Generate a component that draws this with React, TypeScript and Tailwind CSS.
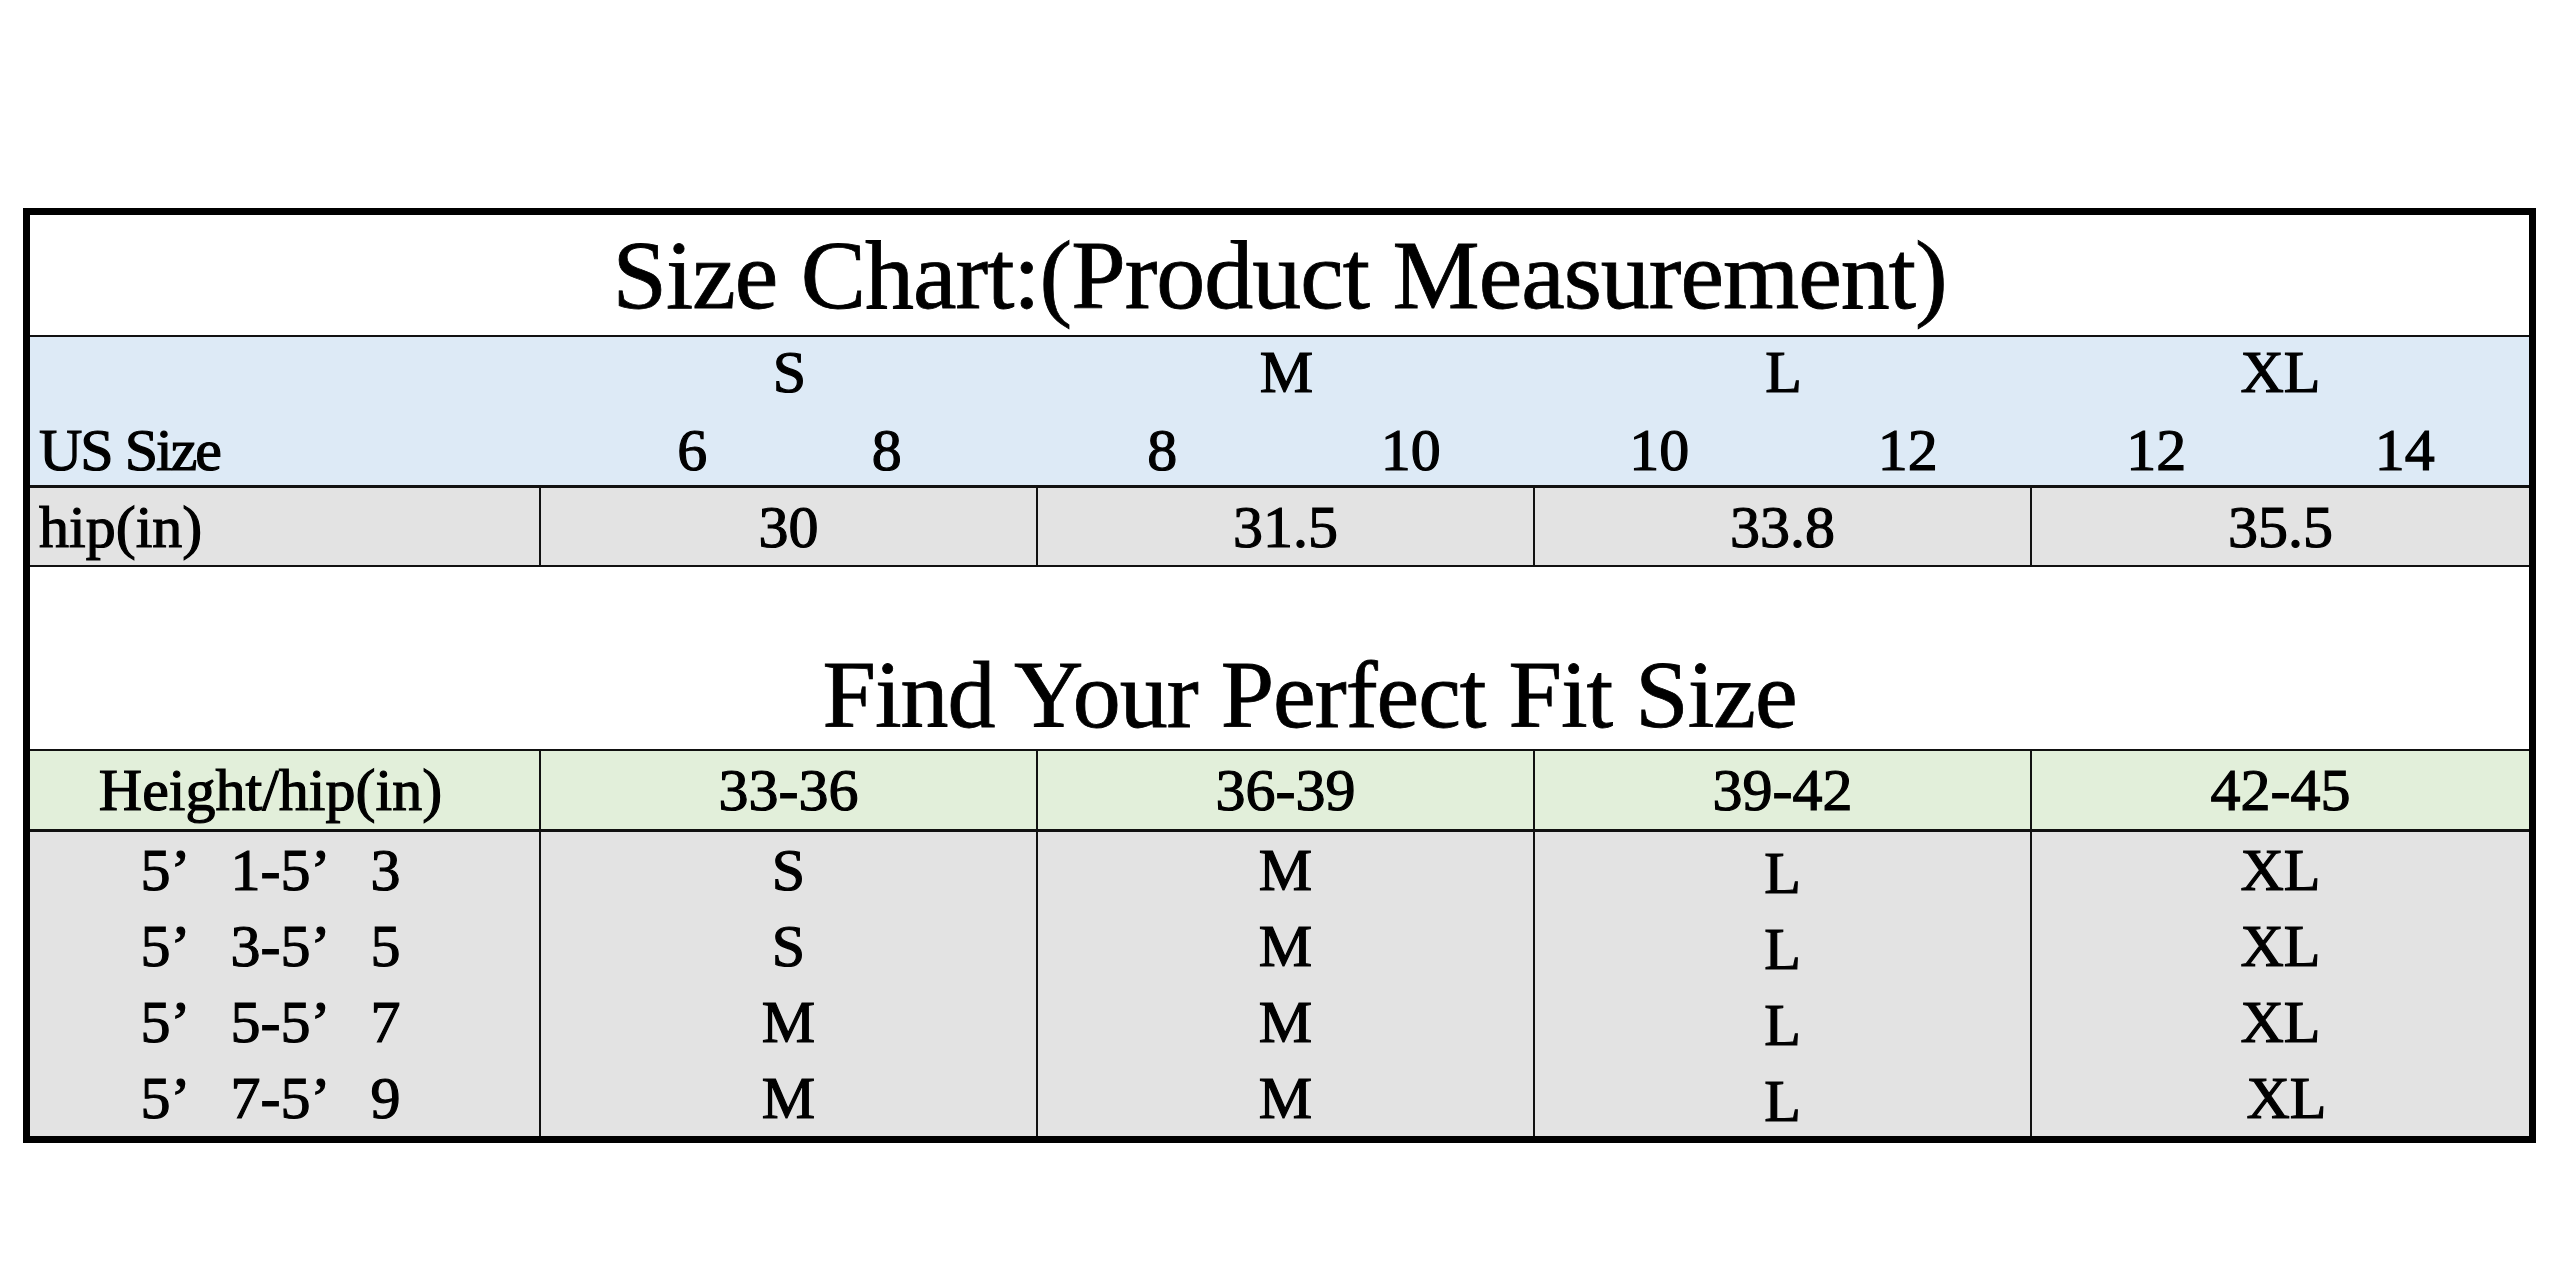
import React from "react";

// size columns shown in the chart
const sizes = [
  { name: "S", us: ["6", "8"], hip: "30", tight: true },
  { name: "M", us: ["8", "10"], hip: "31.5" },
  { name: "L", us: ["10", "12"], hip: "33.8" },
  { name: "XL", us: ["12", "14"], hip: "35.5" },
];

const fitHeaders = ["33-36", "36-39", "39-42", "42-45"];

const fitRows = [
  { h: ["1", "3"], cells: ["S", "M", "L", "XL"] },
  { h: ["3", "5"], cells: ["S", "M", "L", "XL"] },
  { h: ["5", "7"], cells: ["M", "M", "L", "XL"] },
  { h: ["7", "9"], cells: ["M", "M", "L", "XL"] },
];

const cols = "grid grid-cols-[511px_repeat(4,1fr)]";

// height label like 5’1-5’3 where the quote takes a full em
const HeightLabel = ({ from, to }: { from: string; to: string }) => (
  <span>
    5<span className="inline-block w-[1em]">’</span>
    {from}-5<span className="inline-block w-[1em]">’</span>
    {to}
  </span>
);

export default function App() {
  return (
    <div className="w-[2560px] h-[1280px] bg-white pt-[208px] pl-[23px] text-black font-['Liberation_Serif',serif]">
      <div className="w-[2513px] border-[7px] border-black">
        {/* title */}
        <div className="h-[122px] border-b-2 border-[#111] flex items-center justify-center text-[98px] tracking-[-1px] leading-none [-webkit-text-stroke:0.8px_black]">
          Size Chart:(Product Measurement)
        </div>

        {/* US sizes */}
        <div className={`${cols} h-[151px] border-b-[3px] border-[#111] bg-[#ddeaf6] text-[60px] leading-none [-webkit-text-stroke:1.2px_black]`}>
          <div className="flex flex-col">
            <div className="h-[70px]" />
            <div className="h-[78px] pt-[8px] pl-[9px] flex items-center tracking-[-2px]">US Size</div>
          </div>
          {sizes.map((s) => (
            <div key={s.name} className="flex flex-col">
              <div className="h-[70px] flex items-center justify-center">{s.name}</div>
              <div className={`h-[78px] pt-[8px] grid grid-cols-2 ${s.tight ? "px-[54px]" : ""}`}>
                {s.us.map((n, i) => (
                  <div key={i} className="flex items-center justify-center">
                    {n}
                  </div>
                ))}
              </div>
            </div>
          ))}
        </div>

        {/* hip row */}
        <div className={`${cols} h-[79px] border-b-2 border-[#111] bg-[#e3e3e3] text-[60px] leading-none [-webkit-text-stroke:1.2px_black]`}>
          <div className="flex items-center pl-[9px] border-r-2 border-[#111]">hip(in)</div>
          {sizes.map((s, i) => (
            <div key={s.name} className={`flex items-center justify-center ${i < 3 ? "border-r-2 border-[#111]" : ""}`}>
              {s.hip}
            </div>
          ))}
        </div>

        {/* second title */}
        <div className="h-[184px] border-b-2 border-[#111] flex items-end justify-center pl-[60px] pb-[6px] text-[96px] tracking-[-1px] leading-none [-webkit-text-stroke:0.8px_black]">
          Find Your Perfect Fit Size
        </div>

        {/* fit header */}
        <div className={`${cols} h-[81px] border-b-[3px] border-[#111] bg-[#e2efda] text-[60px] leading-none [-webkit-text-stroke:1.2px_black]`}>
          <div className="flex items-center justify-center pr-[28px] border-r-2 border-[#111]">Height/hip(in)</div>
          {fitHeaders.map((h, i) => (
            <div key={h} className={`flex items-center justify-center ${i < 3 ? "border-r-2 border-[#111]" : ""}`}>
              {h}
            </div>
          ))}
        </div>

        {/* fit rows */}
        <div className={`${cols} bg-[#e3e3e3] text-[60px] leading-none [-webkit-text-stroke:1.2px_black]`}>
          <div className="border-r-2 border-[#111] flex flex-col">
            {fitRows.map((r, i) => (
              <div key={i} className="h-[76px] flex items-center justify-center pr-[28px]">
                <HeightLabel from={r.h[0]} to={r.h[1]} />
              </div>
            ))}
          </div>
          {[0, 1, 2, 3].map((c) => (
            <div key={c} className={`flex flex-col ${c < 3 ? "border-r-2 border-[#111]" : ""}`}>
              {fitRows.map((r, i) => (
                <div
                  key={i}
                  className={`h-[76px] flex items-center justify-center ${c === 2 ? "pt-[6px]" : ""} ${c === 3 && i === 3 ? "pl-[12px]" : ""}`}
                >
                  {r.cells[c]}
                </div>
              ))}
            </div>
          ))}
        </div>
      </div>
    </div>
  );
}
